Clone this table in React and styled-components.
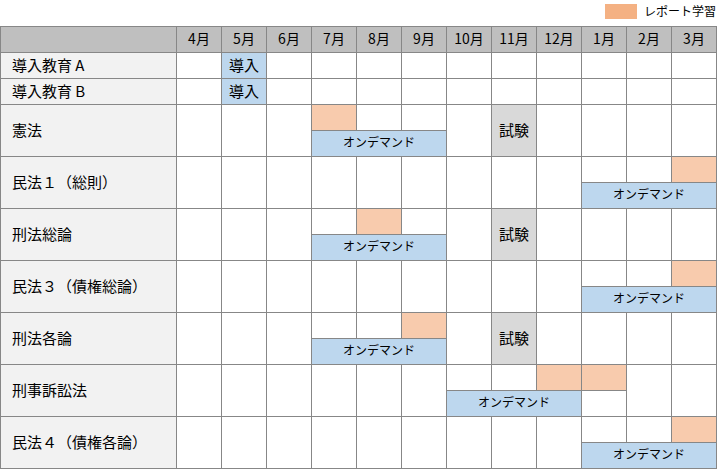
import React from 'react';
import styled, { createGlobalStyle, css } from 'styled-components';

const MONTHS = ['4月', '5月', '6月', '7月', '8月', '9月', '10月', '11月', '12月', '1月', '2月', '3月'];

// month index: 0 = 4月 ... 11 = 3月
const INTRO = [{ name: '導入教育 A' }, { name: '導入教育 B' }];
const COURSES = [
  { name: '憲法', report: [3], ondemand: [3, 5], exam: true },
  { name: '民法１（総則）', report: [11], ondemand: [9, 11] },
  { name: '刑法総論', report: [4], ondemand: [3, 5], exam: true },
  { name: '民法３（債権総論）', report: [11], ondemand: [9, 11] },
  { name: '刑法各論', report: [5], ondemand: [3, 5], exam: true },
  { name: '刑事訴訟法', report: [8, 9], ondemand: [6, 8] },
  { name: '民法４（債権各論）', report: [11], ondemand: [9, 11] },
];
const EXAM_MONTH = 7;

const palette = {
  line: '#878787',
  header: '#bfbfbf',
  label: '#f2f2f2',
  report: '#f8cbad',
  ondemand: '#bdd7ee',
  exam: '#d9d9d9',
  legend: '#f4b183',
};

const GlobalStyle = createGlobalStyle`
  body {
    margin: 0;
    background: #ffffff;
    font-family: "Noto Sans CJK JP", "Noto Sans", sans-serif;
    color: #000000;
  }
`;

export default function App() {
  return (
    <>
      <GlobalStyle />
      <PageStyled>
        <LegendStyled>
          <LegendSwatch />
          <LegendText>レポート学習</LegendText>
        </LegendStyled>
        <GridStyled>
          <Cell $tone="header" />
          {MONTHS.map(m => (
            <Cell key={m} $tone="header" $center>
              {m}
            </Cell>
          ))}
          {INTRO.map(row => (
            <React.Fragment key={row.name}>
              <LabelCell>{row.name}</LabelCell>
              {MONTHS.map((m, i) =>
                i === 1 ? (
                  <Cell key={m} $tone="ondemand" $center $size={15}>
                    導入
                  </Cell>
                ) : (
                  <Cell key={m} />
                )
              )}
            </React.Fragment>
          ))}
          {COURSES.map(course => (
            <CourseRows key={course.name} course={course} />
          ))}
        </GridStyled>
      </PageStyled>
    </>
  );
}

function CourseRows({ course }) {
  const [from, to] = course.ondemand;
  const isReport = i => course.report.includes(i);
  const isOnDemand = i => i >= from && i <= to;
  const isSplit = i => isReport(i) || isOnDemand(i);

  const top = MONTHS.map((m, i) => {
    if (isSplit(i)) return <Cell key={m} $tone={isReport(i) ? 'report' : undefined} />;
    if (course.exam && i === EXAM_MONTH)
      return (
        <Cell key={m} $rows={2} $tone="exam" $center $size={15}>
          試験
        </Cell>
      );
    return <Cell key={m} $rows={2} />;
  });

  const bottom = [];
  MONTHS.forEach((m, i) => {
    if (!isSplit(i)) return;
    if (i === from) {
      bottom.push(
        <Cell key={`b${m}`} $cols={to - from + 1} $tone="ondemand" $center $size={12}>
          オンデマンド
        </Cell>
      );
    } else if (!isOnDemand(i)) {
      bottom.push(<Cell key={`b${m}`} />);
    }
  });

  return (
    <>
      <LabelCell $rows={2}>{course.name}</LabelCell>
      {top}
      {bottom}
    </>
  );
}

const PageStyled = styled.div`
  width: 718px;
  display: flex;
  flex-direction: column;
`;

const LegendStyled = styled.div`
  height: 26px;
  display: flex;
  flex-direction: row;
  align-items: center;
  justify-content: flex-end;
  gap: 7px;
  padding-right: 2px;
  box-sizing: border-box;
`;

const LegendSwatch = styled.div`
  width: 32px;
  height: 15px;
  margin-top: -3px;
  background-color: ${palette.legend};
`;

const LegendText = styled.span`
  font-size: 12px;
  line-height: 15px;
  margin-top: -5px;
`;

const GridStyled = styled.div`
  width: 717px;
  display: grid;
  grid-template-columns: 175px repeat(12, 44px);
  grid-auto-rows: 25px;
  gap: 1px;
  padding: 1px;
  box-sizing: border-box;
  background-color: ${palette.line};
`;

const Cell = styled.div`
  ${({ $rows = 1, $cols = 1 }) => css`
    grid-row: span ${$rows};
    grid-column: span ${$cols};
  `}
  background-color: ${({ $tone }) => ($tone ? palette[$tone] : '#ffffff')};
  display: flex;
  align-items: center;
  justify-content: ${({ $center }) => ($center ? 'center' : 'flex-start')};
  padding-bottom: 3px;
  box-sizing: border-box;
  font-size: ${({ $size = 14 }) => `${$size}px`};
  line-height: 1;
  white-space: nowrap;
`;

const LabelCell = styled(Cell).attrs({ $size: 15 })`
  background-color: ${palette.label};
  padding-left: 11px;
`;
